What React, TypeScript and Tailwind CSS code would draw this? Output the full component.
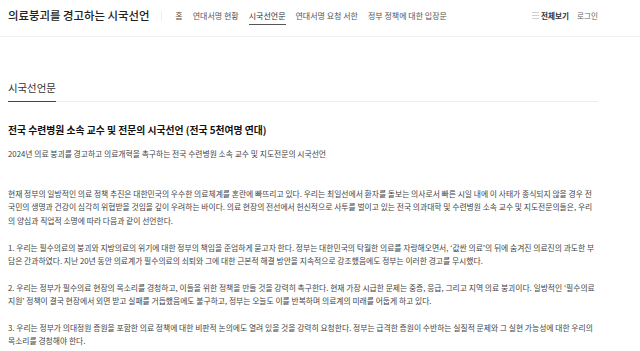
import React from 'react'

const font = { fontFamily: '"Noto Sans CJK KR", "Noto Sans", sans-serif' }

// 상단 메뉴
const navItems = ['홈', '연대서명 현황', '시국선언문', '연대서명 요청 서한', '정부 정책에 대한 입장문']

const paragraphs = [
  '현재 정부의 일방적인 의료 정책 추진은 대한민국의 우수한 의료체계를 혼란에 빠뜨리고 있다. 우리는 최일선에서 환자를 돌보는 의사로서 빠른 시일 내에 이 사태가 종식되지 않을 경우 전국민의 생명과 건강이 심각히 위협받을 것임을 깊이 우려하는 바이다. 의료 현장의 전선에서 헌신적으로 사투를 벌이고 있는 전국 의과대학 및 수련병원 소속 교수 및 지도전문의들은, 우리의 양심과 직업적 소명에 따라 다음과 같이 선언한다.',
  '1. 우리는 필수의료의 붕괴와 지방의료의 위기에 대한 정부의 책임을 준엄하게 묻고자 한다. 정부는 대한민국의 탁월한 의료를 자랑해오면서, ‘값싼 의료’의 뒤에 숨겨진 의료진의 과도한 부담은 간과하였다. 지난 20년 동안 의료계가 필수의료의 쇠퇴와 그에 대한 근본적 해결 방안을 지속적으로 강조했음에도 정부는 이러한 경고를 무시했다.',
  '2. 우리는 정부가 필수의료 현장의 목소리를 경청하고, 이들을 위한 정책을 만들 것을 강력히 촉구한다. 현재 가장 시급한 문제는 중증, 응급, 그리고 지역 의료 붕괴이다. 일방적인 ‘필수의료 지원’ 정책이 결국 현장에서 외면 받고 실패를 거듭했음에도 불구하고, 정부는 오늘도 이를 반복하며 의료계의 미래를 어둡게 하고 있다.',
  '3. 우리는 정부가 의대정원 증원을 포함한 의료 정책에 대한 비판적 논의에도 열려 있을 것을 강력히 요청한다. 정부는 급격한 증원이 수반하는 실질적 문제와 그 실현 가능성에 대한 우리의 목소리를 경청해야 한다.',
]

function Header() {
  return (
    <header className="h-[37px] border-b border-[#f0f0f0]">
      <div className="flex items-center h-full pl-2 w-[598px] pb-[5px]">
        <h1 className="text-[11.4px] font-medium text-[#222] leading-none">
          의료붕괴를 경고하는 시국선언
        </h1>
        <span className="ml-[12px] w-px h-[10px] bg-[#eee]" />
        <nav className="flex items-center gap-[10px] ml-[13px] text-[8px] text-[#555]">
          {navItems.map((item) => (
            <a
              key={item}
              className={`relative leading-none py-[4px] ${item === '시국선언문' ? 'text-[#333]' : ''}`}
            >
              {item}
              {item === '시국선언문' && (
                <span className="absolute left-0 right-0 bottom-[-1px] h-px bg-[#555]" />
              )}
            </a>
          ))}
        </nav>
        <div className="flex items-center ml-auto text-[7.6px] leading-none">
          <svg width="8" height="7" viewBox="0 0 8 7" className="mr-px">
            <path d="M0 0.5H7M0 3.5H7M0 6.5H7" stroke="#bbb" strokeWidth="0.7" />
          </svg>
          <span className="font-bold text-[#333]">전체보기</span>
          <span className="ml-[8px] text-[#666]">로그인</span>
        </div>
      </div>
    </header>
  )
}

export default function App() {
  return (
    <div className="bg-white min-h-[351px] overflow-hidden" style={font}>
      <Header />
      <main className="pl-2 w-[598px]">
        {/* 섹션 제목 */}
        <div className="mt-[45px] border-b border-[#ececec] flex">
          <h2 className="text-[10.4px] text-[#333] leading-[12px] pb-[7px] border-b-[1.5px] border-[#444] -mb-px">
            시국선언문
          </h2>
        </div>
        <h3 className="mt-[22px] text-[9.8px] font-bold text-[#111] leading-[12px]">
          전국 수련병원 소속 교수 및 전문의 시국선언 (전국 5천여명 연대)
        </h3>
        <p className="mt-[13px] text-[7.8px] text-[#444] leading-[10px]">
          2024년 의료 붕괴를 경고하고 의료개혁을 촉구하는 전국 수련병원 소속 교수 및 지도전문의 시국선언
        </p>
        <div className="mt-[28px] flex flex-col gap-[13.4px] text-[7.8px] leading-[13.4px] text-[#444] break-all">
          {paragraphs.map((p, i) => (
            <p key={i}>{p}</p>
          ))}
        </div>
      </main>
    </div>
  )
}
